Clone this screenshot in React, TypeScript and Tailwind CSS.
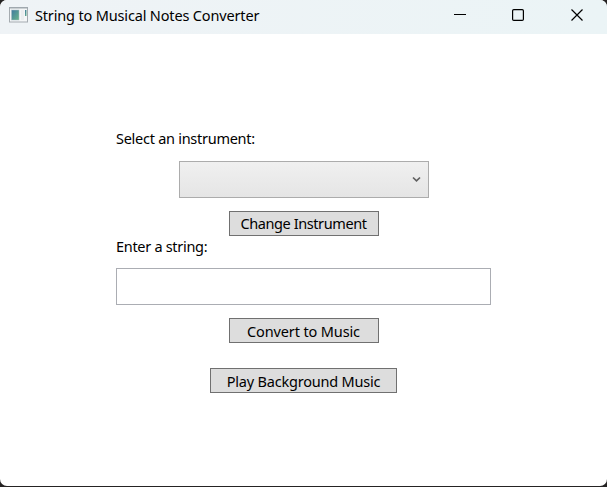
import React from "react";

function AppIcon() {
  return (
    <svg width="20" height="16" viewBox="0 0 20 16" className="ml-[9px] shrink-0" aria-hidden="true">
      <defs>
        <linearGradient id="pane" x1="0" y1="0" x2="1" y2="1">
          <stop offset="0" stopColor="#4079a0" />
          <stop offset="1" stopColor="#69b58b" />
        </linearGradient>
      </defs>
      <rect x="0.5" y="0.5" width="18" height="14.5" fill="#f4f6f7" stroke="#a5abb0" />
      <path d="M0 0.8H19" stroke="#a0a8ae" strokeWidth="1.6" />
      <rect x="2.5" y="3" width="7.5" height="10" fill="url(#pane)" stroke="#a9bcc3" strokeWidth="0.5" />
      <rect x="12" y="3" width="3" height="10" fill="#eceef0" />
      <rect x="16" y="3" width="1.5" height="6" fill="url(#pane)" />
    </svg>
  );
}

function ActionButton({ label, className, textClass }: { label: string; className: string; textClass: string }) {
  return (
    <button className={`flex h-[25px] items-center justify-center border border-[#707070] bg-[#dddddd] ${className}`}>
      <span className={`whitespace-nowrap ${textClass}`}>{label}</span>
    </button>
  );
}

export default function App() {
  return (
    <div className="h-[487px] w-[607px] overflow-hidden bg-[#252323] pb-px font-['Noto_Sans','Open_Sans',sans-serif] text-[14.5px] leading-5 text-black">
      <main className="h-[486px] overflow-hidden rounded-[7px] bg-white">
        <header className="flex h-[34px] items-center bg-gradient-to-r from-[#eff3f6] to-[#ebf4f6] pb-[4px]">
          <AppIcon />
          <h1 className="ml-[6px] whitespace-nowrap text-[14.5px] tracking-[-0.16px]">String to Musical Notes Converter</h1>
          <svg className="ml-auto mr-[23px] shrink-0" width="130" height="14" viewBox="0 0 130 14" fill="none" stroke="#000" aria-hidden="true">
            <path d="M0 6.5H12" />
            <rect x="58.6" y="1.6" width="10.8" height="10.8" rx="1.2" strokeWidth="1.2" />
            <path d="M117.5 1.5L128.5 12.5M128.5 1.5L117.5 12.5" strokeWidth="1.2" />
          </svg>
        </header>
        <section className="mx-auto flex w-[375px] flex-col items-center pt-[94px]">
          <label className="h-[33px] self-start whitespace-nowrap tracking-[-0.27px]">Select an instrument:</label>
          <div className="flex h-[37px] w-[250px] items-center justify-end border border-[#acacac] bg-gradient-to-b from-[#f0f0f0] to-[#e5e5e5] pr-[7px] pb-px">
            <svg width="9" height="7" viewBox="0 0 9 7" fill="none" stroke="#606060" strokeWidth="1.7" aria-hidden="true">
              <path d="M1 1.5L4.5 4.8L8 1.5" />
            </svg>
          </div>
          <ActionButton label="Change Instrument" className="mt-[13px] w-[150px] pb-[2px]" textClass="tracking-[-0.4px]" />
          <label className="h-[32px] self-start whitespace-nowrap tracking-[-0.3px]">Enter a string:</label>
          <input aria-label="Enter a string" className="h-[37px] w-full border border-[#abadb3] bg-white px-1 outline-none" />
          <ActionButton label="Convert to Music" className="mt-[13px] w-[150px]" textClass="tracking-[-0.13px]" />
          <ActionButton label="Play Background Music" className="mt-[25px] w-[187px]" textClass="tracking-[-0.2px]" />
        </section>
      </main>
    </div>
  );
}
